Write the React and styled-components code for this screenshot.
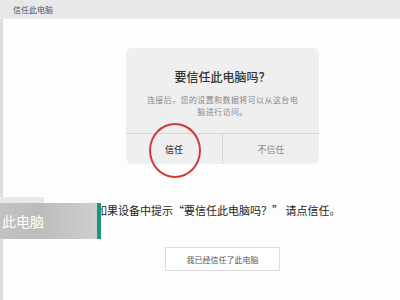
import React from "react";
import styled, { createGlobalStyle } from "styled-components";

const GlobalStyle = createGlobalStyle`
  html, body {
    margin: 0;
    padding: 0;
    background: #fdfdfd;
  }
  body {
    font-family: "Noto Sans CJK SC", "Noto Sans", sans-serif;
  }
`;

const Screen = styled.div`
  position: relative;
  width: 400px;
  height: 300px;
  overflow: hidden;
  background: #fdfdfd;
  display: flex;
  flex-direction: column;
`;

const TitleBar = styled.div`
  height: 18px;
  flex-shrink: 0;
  background: #e8e8e8;
  border-bottom: 1px solid #f1f1f1;
  display: flex;
  align-items: center;
  padding-left: 13px;
  font-size: 8px;
  color: #555;
`;

const Body = styled.div`
  flex: 1;
  display: flex;
`;

const EdgeStrip = styled.div`
  width: 3px;
  background: #dedede;
`;

const Content = styled.div`
  flex: 1;
  display: flex;
  flex-direction: column;
  padding-top: 29px;
`;

const Dialog = styled.div`
  position: relative;
  width: 193px;
  margin-left: 123px;
  background: #efefef;
  border-radius: 6px;
  display: flex;
  flex-direction: column;
`;

const DialogBody = styled.div`
  height: 85px;
  box-sizing: border-box;
  padding: 20px 18px 0;
  text-align: center;
`;

const DialogTitle = styled.div`
  font-size: 12px;
  line-height: 18px;
  color: #333;
  font-weight: 500;
`;

const DialogText = styled.div`
  margin-top: 8px;
  font-size: 8px;
  line-height: 12px;
  letter-spacing: 0.4px;
  color: #888;
  word-break: break-all;
`;

const DialogFooter = styled.div`
  height: 30px;
  border-top: 1px solid #d6d6d6;
  display: flex;
`;

const DialogButton = styled.div`
  flex: 1;
  display: flex;
  align-items: center;
  justify-content: center;
  font-size: 9px;
  color: ${(p) => (p.$primary ? "#444" : "#888")};
  font-weight: ${(p) => (p.$primary ? 500 : 400)};
  & + & {
    border-left: 1px solid #d6d6d6;
  }
`;

const Circle = styled.div`
  position: absolute;
  left: 23px;
  top: 75px;
  width: 48px;
  height: 51px;
  border: 2px solid #d23a3a;
  border-radius: 50%;
`;

const Hint = styled.div`
  margin-top: 38px;
  margin-left: 93px;
  font-size: 11px;
  line-height: 16px;
  color: #222;
  white-space: nowrap;
`;

const ConfirmButton = styled.div`
  margin-top: 29px;
  margin-left: 162px;
  width: 113px;
  height: 22px;
  border: 1px solid #dcdcdc;
  background: #fff;
  display: flex;
  align-items: center;
  justify-content: center;
  font-size: 8px;
  color: #555;
`;

const Caption = styled.div`
  position: absolute;
  left: 0;
  top: 203px;
  display: flex;
  height: 36px;
`;

const CaptionBox = styled.div`
  width: 97px;
  background: linear-gradient(90deg, #c2c2c2 0%, #bcbcbc 40%, #cfcfcf 100%);
  color: #fff;
  font-size: 14px;
  display: flex;
  align-items: center;
  padding-left: 2px;
  box-sizing: border-box;
`;

const CaptionBar = styled.div`
  width: 4px;
  background: #1a9580;
`;

const CaptionStep = styled.div`
  position: absolute;
  left: 0;
  top: -6px;
  width: 44px;
  height: 6px;
  background: #e9e9e9;
`;

export default function App() {
  return (
    <>
      <GlobalStyle />
      <Screen>
        <TitleBar>信任此电脑</TitleBar>
        <Body>
          <EdgeStrip />
          <Content>
            <Dialog>
              <DialogBody>
                <DialogTitle>要信任此电脑吗？</DialogTitle>
                <DialogText>连接后，您的设置和数据将可以从这台电脑进行访问。</DialogText>
              </DialogBody>
              <DialogFooter>
                <DialogButton $primary>信任</DialogButton>
                <DialogButton>不信任</DialogButton>
              </DialogFooter>
              <Circle />
            </Dialog>
            <Hint>如果设备中提示“要信任此电脑吗？” 请点信任。</Hint>
            <ConfirmButton>我已经信任了此电脑</ConfirmButton>
          </Content>
        </Body>
        <Caption>
          <CaptionStep />
          <CaptionBox>此电脑</CaptionBox>
          <CaptionBar />
        </Caption>
      </Screen>
    </>
  );
}
